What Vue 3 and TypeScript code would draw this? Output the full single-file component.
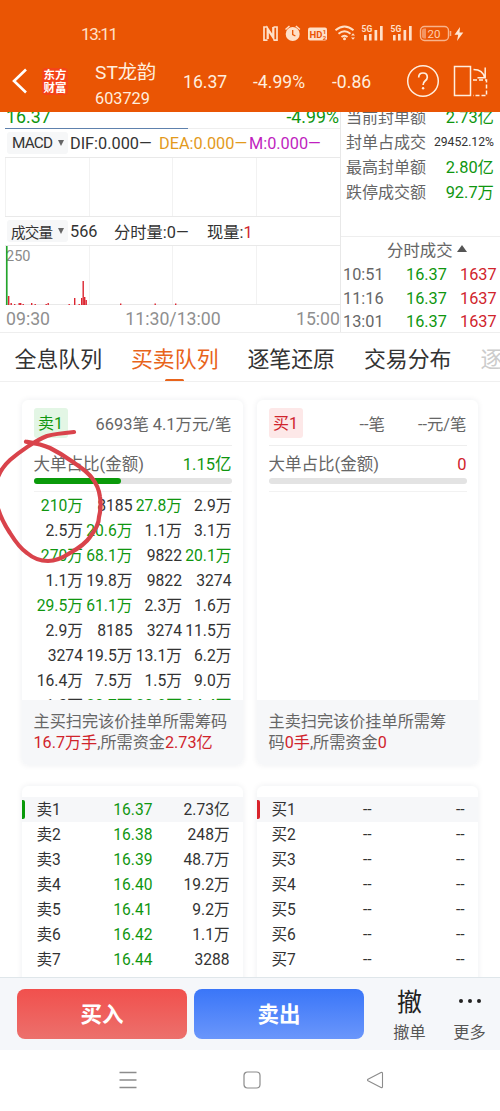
<script setup lang="ts">
type Tone = 'up' | 'down' | 'plain'

const sealStats: { label: string; value: string; small?: boolean }[] = [
  { label: '当前封单额', value: '2.73亿' },
  { label: '封单占成交', value: '29452.12%', small: true },
  { label: '最高封单额', value: '2.80亿' },
  { label: '跌停成交额', value: '92.7万' },
]

const ticks = [
  { time: '10:51', price: '16.37', volume: '1637' },
  { time: '11:16', price: '16.37', volume: '1637' },
  { time: '13:01', price: '16.37', volume: '1637' },
]

const tabs = ['全息队列', '买卖队列', '逐笔还原', '交易分布', '逐']

const queueRows: string[][] = [
  ['210万', '8185', '27.8万', '2.9万'],
  ['2.5万', '20.6万', '1.1万', '3.1万'],
  ['270万', '68.1万', '9822', '20.1万'],
  ['1.1万', '19.8万', '9822', '3274'],
  ['29.5万', '61.1万', '2.3万', '1.6万'],
  ['2.9万', '8185', '3274', '11.5万'],
  ['3274', '19.5万', '13.1万', '6.2万'],
  ['16.4万', '7.5万', '1.5万', '9.0万'],
  ['1.3万', '20.7万', '20.9万', '24.4万'],
]

// Orders above 200 thousand are highlighted as large orders.
function orderTone(text: string): Tone {
  return text.endsWith('万') && parseFloat(text) >= 20 ? 'down' : 'plain'
}

const asks = [
  ['卖1', '16.37', '2.73亿'],
  ['卖2', '16.38', '248万'],
  ['卖3', '16.39', '48.7万'],
  ['卖4', '16.40', '19.2万'],
  ['卖5', '16.41', '9.2万'],
  ['卖6', '16.42', '1.1万'],
  ['卖7', '16.44', '3288'],
]
const bids = [1, 2, 3, 4, 5, 6, 7].map((n) => [`买${n}`, '--', '--'])

// [x, height] of each red volume bar
const bars: number[][] = [
  [8.5, 9], [11, 2], [14.500, 1], [19, 2], [20.500, 2], [23, 1], [31.500, 2], [35, 1],
  [46, 1], [48, 2], [69, 1], [74.500, 7], [79, 1], [81.500, 7], [83, 24], [84.500, 8],
  [86, 5], [120.500, 1.500], [155, 1.500], [175.500, 1.500],
]
</script>

<template>
  <div class="screen">
    <header class="header">
      <div class="status">
        <span class="clock">13:11</span>
        <svg class="status-icons" width="206" height="22" viewBox="262 22 206 22">
          <g fill="none" stroke="#ffe0c8">
            <path d="M267.500 27H264v13.200h3.500M273.500 27h3.500v13.200h-3.500" stroke-width="1.700" />
            <path d="M267.700 39v-10l5.600 8.500v-10.500" stroke-width="2.300" />
          </g>
          <g fill="#ffe0c8">
            <circle cx="292.700" cy="34" r="7" />
            <path d="M285.500 29.500l4-3.500M299.900 29.500l-4-3.500" stroke="#ffe0c8" stroke-width="1.500" />
            <path d="M292.700 30v4.500l2.700 1.500" fill="none" stroke="#ea5504" stroke-width="1.300" />
            <rect x="308" y="27.500" width="19" height="13" rx="2" />
          </g>
          <text x="309.500" y="37.800" class="hd">HD</text>
          <text x="322.800" y="33.500" class="tiny">1</text>
          <text x="322.800" y="39.600" class="tiny">2</text>
          <g fill="none" stroke="#ffe0c8" stroke-width="1.900">
            <path d="M335.500 30.300q9-7.800 18 0M338.500 33.700q6-5 12 0M341.500 36.900q3-2.500 6 0" />
          </g>
          <circle cx="344.500" cy="38.800" r="1.500" fill="#ffe0c8" />
          <path d="M351 35.500l2-2.200 2 2.200zM351 37.500l2 2.200 2-2.200z" fill="#ffe0c8" />
          <g v-for="x in [362, 391]" :key="x" fill="#ffe0c8">
            <text :x="x - 0.500" y="32.300" class="five">5G</text>
            <rect :x="x + 2" y="35" width="2.600" height="5.500" />
            <rect :x="x + 7" y="34" width="2.600" height="6.500" />
            <rect :x="x + 12.500" y="30" width="2.700" height="10.500" />
            <rect :x="x + 18" y="26" width="2.700" height="14.500" />
          </g>
          <rect x="420.500" y="26.500" width="28" height="14" rx="4" fill="none" stroke="#f8b48c" stroke-width="1.400" />
          <path d="M424 28.500h2v10h-2q-2 0-2-2v-6q0-2 2-2z" fill="#f39462" />
          <path d="M450.500 31v5" stroke="#f8b48c" stroke-width="1.500" />
          <text x="427.500" y="37.800" class="battery">20</text>
          <path d="M460 27l-5.500 7.800h3.700l-1.200 6.200 6.300-8.500h-3.800z" fill="#ffe8d5" />
        </svg>
      </div>
      <div class="quote">
        <svg class="back" width="18" height="28" viewBox="0 0 18 28"><path d="M15 2.500L3 14l12 11.500" fill="none" stroke="#fff" stroke-width="2.600" /></svg>
        <div class="brand">东方<br />财富</div>
        <div class="stock"><div class="name">ST龙韵</div><div class="code">603729</div></div>
        <span class="num">16.37</span>
        <span class="num">-4.99%</span>
        <span class="num">-0.86</span>
        <svg class="help" width="34" height="34" viewBox="0 0 34 34">
          <circle cx="17" cy="17" r="15.300" fill="none" stroke="#ffeede" stroke-width="1.500" />
          <path d="M12.700 13.500q0-4.500 4.300-4.500 4.300 0 4.300 4.200 0 2-2.300 3.800-1.900 1.500-1.900 4" fill="none" stroke="#ffeede" stroke-width="1.700" />
          <circle cx="17.100" cy="24.200" r="1.200" fill="#ffeede" />
        </svg>
        <svg class="rotate" width="36" height="34" viewBox="0 0 36 34">
          <g fill="none" stroke="#ffeede" stroke-width="1.500">
            <rect x="1.500" y="2.500" width="16" height="29" />
            <path d="M20 16h13.500v15.500H20" stroke-dasharray="4 2" />
            <path d="M20.500 5.500q9.500 0 11.200 8.500M24.500 13.800h7.700V3.500" />
          </g>
        </svg>
      </div>
    </header>

    <section class="market">
      <div class="charts">
        <div class="price-end"><span>16.37</span><span>-4.99%</span></div>
        <div class="indicator">
          <span class="picker">MACD<i class="caret"></i></span>
          <span class="dif">DIF:0.000—</span><span class="dea">DEA:0.000—</span><span class="m">M:0.000—</span>
        </div>
        <div class="plot"><i></i><i></i><i></i><i></i></div>
        <div class="indicator vol">
          <span class="picker">成交量<i class="caret"></i></span>
          <span class="total">566</span><span class="minute">分时量:0—</span><span>现量:<b>1</b></span>
        </div>
        <div class="plot volume">
          <i></i><i></i><i></i><i></i>
          <span class="scale">250</span>
          <svg class="bars" width="340" height="59" viewBox="0 0 340 59">
            <rect x="6" y="0" width="1.600" height="59" fill="#23a52c" />
            <rect v-for="b in bars" :key="b[0]" :x="b[0] - 0.500" :y="59 - b[1]" width="1.400" :height="b[1]" fill="#dc2530" />
          </svg>
        </div>
        <div class="axis"><span>09:30</span><span>11:30/13:00</span><span>15:00</span></div>
      </div>
      <aside class="side">
        <div class="stats">
          <div v-for="s in sealStats" :key="s.label" class="stat">
            <span>{{ s.label }}</span><span :class="s.small ? 'small' : 'down'">{{ s.value }}</span>
          </div>
        </div>
        <div class="ticks-title">分时成交<i></i></div>
        <div v-for="t in ticks" :key="t.time" class="tick">
          <span>{{ t.time }}</span><span class="down">{{ t.price }}</span><span class="up">{{ t.volume }}</span>
        </div>
      </aside>
    </section>

    <nav class="tabs">
      <span v-for="(t, i) in tabs" :key="i" :class="['tab', { active: i === 1, faded: i === 4 }]">{{ t }}</span>
    </nav>

    <main class="content">
      <section class="card queue">
        <div class="head"><span class="tag sell">卖1</span><span class="per"><span>6693笔</span><span>4.1万元/笔</span></span></div>
        <div class="ratio">
          <div class="ratio-text"><span>大单占比(金额)</span><span class="down">1.15亿</span></div>
          <div class="track"><div class="fill"></div></div>
        </div>
        <div class="orders">
          <template v-for="(r, i) in queueRows" :key="i">
            <span v-for="(c, j) in r" :key="j" :class="orderTone(c)">{{ c }}</span>
          </template>
        </div>
        <footer>主买扫完该价挂单所需筹码<br /><span class="up">16.7万手</span>,所需资金<span class="up">2.73亿</span></footer>
      </section>
      <section class="card queue">
        <div class="head"><span class="tag buy">买1</span><span class="per wide"><span>--笔</span><span>--元/笔</span></span></div>
        <div class="ratio">
          <div class="ratio-text"><span>大单占比(金额)</span><span class="up">0</span></div>
          <div class="track"></div>
        </div>
        <div class="orders"></div>
        <footer>主卖扫完该价挂单所需筹<br />码<span class="up">0手</span>,所需资金<span class="up">0</span></footer>
      </section>
      <section class="card book asks">
        <div v-for="r in asks" :key="r[0]" class="level"><span>{{ r[0] }}</span><span class="down">{{ r[1] }}</span><span>{{ r[2] }}</span></div>
      </section>
      <section class="card book bids">
        <div v-for="r in bids" :key="r[0]" class="level"><span>{{ r[0] }}</span><span>{{ r[1] }}</span><span>{{ r[2] }}</span></div>
      </section>
    </main>

    <div class="actions">
      <button class="trade buy-btn">买入</button>
      <button class="trade sell-btn">卖出</button>
      <div class="action"><span class="glyph">撤</span><span>撤单</span></div>
      <div class="action more"><span class="dots"><i></i><i></i><i></i></span><span>更多</span></div>
    </div>

    <div class="system-nav">
      <svg width="18" height="18" viewBox="0 0 18 18"><path d="M.5 1.500h17M.5 9h17M.5 16.500h17" stroke="#8c8c8c" stroke-width="1.300" /></svg>
      <svg width="18" height="18" viewBox="0 0 18 18"><rect x="1" y="1" width="16" height="16" rx="3.500" fill="none" stroke="#8c8c8c" stroke-width="1.200" /></svg>
      <svg width="18" height="18" viewBox="0 0 18 18"><path d="M15 1.500L2 8.200q-1 .8 0 1.600L15 16.500q1.500.5 1.500-1V2.500q0-1.500-1.500-1z" fill="none" stroke="#8c8c8c" stroke-width="1.100" /></svg>
    </div>

    <svg class="marker" width="110" height="140" viewBox="0 425 110 140">
      <path
        d="M74 432C63 433 54 434 47 436C36 440 18 453 10 460C-1 470 -5 482 -5 493C-4 507 2 521 10 533C15 541 21 549 27 553C34 559 41 561 48 561C56 561 64 557 70 553C79 548 86 543 90 537C97 528 99 522 99 517C101 509 101 503 100 497C99 488 96 483 92 478C87 471 80 467 73 462C66 457 58 452 50 448C41 444 34 443 26 441.700"
        fill="none" stroke="#d9434b" stroke-width="4.200" stroke-linecap="round" stroke-linejoin="round" />
    </svg>
  </div>
</template>

<style>
body {
  margin: 0;
}
</style>

<style scoped>
* {
  box-sizing: border-box;
}
.screen {
  position: relative;
  width: 500px;
  height: 1111px;
  overflow: hidden;
  background: #fff;
  color: #333;
  font-family: Roboto, 'Noto Sans CJK SC', sans-serif;
  font-size: 16px;
  white-space: nowrap;
}
.up { color: #d0242c; }
.down { color: #0f960f; }
.header {
  height: 112px;
  background: #ea5504;
  color: #ffeede;
}
.status {
  display: flex;
  align-items: center;
  justify-content: space-between;
  height: 44px;
  padding: 22px 32px 0 81px;
}
.clock { font-size: 17px; line-height: 22px; padding-top: 2px; letter-spacing: -1.300px; color: #ffe0c8; }
.status-icons text { font-family: Roboto, sans-serif; font-weight: 700; }
.status-icons .hd { font-size: 9.500px; fill: #ea5504; }
.status-icons .tiny { font-size: 6px; fill: #ea5504; }
.status-icons .five { font-size: 8.500px; }
.status-icons .battery { font-size: 11.500px; font-weight: 400; fill: #ffd0b0; }
.quote {
  display: grid;
  grid-template-columns: 42px 53px 88px 70px 79px 73px 49px 40px;
  align-items: center;
  height: 68px;
}
.back { margin: 6px 0 0 11px; }
.brand {
  width: 26px;
  height: 27px;
  margin-top: 6px;
  background: #f44318;
  border-radius: 4px;
  color: #fff;
  font: 700 11.500px/13px 'Noto Sans CJK SC', sans-serif;
  text-align: center;
}
.name { font-size: 19.200px; line-height: 26px; }
.code { font-size: 16.300px; line-height: 20px; margin-top: 3px; }
.stock { padding-top: 12px; }
.num { font-size: 17.600px; line-height: 24px; padding-top: 7px; }
.help { margin: 5px 0 0 1px; }
.rotate { margin: 6px 0 0 -1px; }

.market {
  display: flex;
  height: 221px;
  border-bottom: 1px solid #eee;
}
.charts { width: 341px; border-right: 1px solid #e8e8e8; }
.price-end {
  display: flex;
  justify-content: space-between;
  align-items: flex-end;
  height: 17px;
  overflow: hidden;
  padding: 0 1px 0 6px;
  border-style: solid;
  border-width: 0 0 1.500px;
  border-image: linear-gradient(90deg, #fff 6px, #5e81ad 6px 188px, #eee 188px) 1;
  color: #0f960f;
  font-size: 17.800px;
  line-height: 22px;
}
.indicator {
  display: flex;
  align-items: center;
  height: 28px;
  padding-left: 7px;
  font-size: 16.300px;
}
.indicator b { color: #d0242c; font-weight: 400; }
.picker {
  display: flex;
  align-items: center;
  justify-content: space-between;
  width: 61px;
  height: 22px;
  padding: 0 4px 0 5px;
  margin-right: 2px;
  background: #f6f7f8;
  border-radius: 3px;
  font-size: 15.300px;
  letter-spacing: -0.800px;
}
.vol .picker { font-size: 14.600px; padding-left: 4px; }
.caret { border: 3.500px solid transparent; border-top: 6px solid #666; border-bottom: 0; }
.dif { width: 89px; }
.dea { width: 90px; color: #e39a1c; }
.m { color: #c01fc0; }
.total { width: 44px; }
.minute { width: 93px; }
.plot {
  position: relative;
  display: flex;
  height: 60px;
  border: solid #e9e9e9;
  border-width: 1px 0 1px;
  margin-left: 5px;
}
.plot i { width: 83.500px; border-left: 1px solid #f2f2f2; }
.scale { position: absolute; left: 1px; top: 2px; font-size: 14.500px; line-height: 18px; color: #8a8a8a; }
.bars { position: absolute; left: -5px; top: 0; }
.axis {
  display: flex;
  justify-content: space-between;
  padding: 0 0 0 6px;
  color: #8f8f8f;
  font-size: 17.700px;
  line-height: 28px;
}
.side { width: 159px; }
.stats { height: 125px; overflow: hidden; border-bottom: 1px solid #eee; }
.stat {
  display: flex;
  justify-content: space-between;
  height: 25px;
  padding: 0 6px 0 5px;
  line-height: 25px;
  color: #666;
}
.stat:first-child { margin-top: -7px; }
.stat .down { font-size: 16.400px; }
.small { font-size: 12.200px; color: #333; }
.ticks-title { padding-left: 46px; line-height: 27px; height: 26px; color: #666; font-size: 16.400px; }
.ticks-title i {
  display: inline-block;
  margin-left: 4px;
  border: 5px solid transparent;
  border-bottom: 7px solid #555;
  border-top: 0;
  vertical-align: 4px;
}
.tick {
  display: grid;
  grid-template-columns: 63px 54px 40px;
  padding-left: 2px;
  line-height: 23.500px;
  font-size: 16.300px;
}
.tick span:first-child { color: #666; }

.tabs {
  display: flex;
  gap: 28.900px;
  height: 49px;
  padding-left: 14.500px;
  border-bottom: 1px solid #f0f0f0;
  font-size: 21.900px;
  line-height: 53px;
  overflow: hidden;
}
.tab { position: relative; flex: none; height: 48px; }
.active { color: #e8641b; }
.active::after {
  content: '';
  position: absolute;
  left: 34px;
  bottom: -1px;
  width: 19px;
  height: 3px;
  border-radius: 2px;
  background: #e8641b;
}
.faded { color: #ccc; }

.content {
  display: grid;
  grid-template-columns: 221px 221px;
  grid-template-rows: 365px 200px;
  gap: 21px 14px;
  height: 595px;
  padding: 18px 22px 0;
  overflow: hidden;
}
.card {
  background: #fff;
  border-radius: 6px;
  box-shadow: 0 0 6px rgba(30, 40, 60, 0.08);
  overflow: hidden;
}
.queue { display: flex; flex-direction: column; }
.head, .ratio, .orders { margin: 0 11.500px; }
.head {
  display: flex;
  align-items: center;
  justify-content: space-between;
  height: 46px;
  border-bottom: 1px solid #eee;
  color: #666;
}
.tag { width: 34px; height: 30px; border-radius: 3px; font-size: 16px; line-height: 32px; text-align: center; }
.sell { background: #e3f6e5; color: #0f960f; }
.buy { background: #fde8e8; color: #d0242c; }
.per { display: flex; gap: 4px; font-size: 16.400px; }
.per.wide { gap: 33px; }
.ratio { height: 46px; border-bottom: 1px solid #f2f2f2; }
.ratio-text {
  display: flex;
  justify-content: space-between;
  height: 32px;
  line-height: 38px;
  font-size: 16.500px;
}
.ratio-text span:first-child { color: #666; }
.track { height: 6px; border-radius: 3px; background: #e3e3e3; }
.fill { width: 87px; height: 6px; border-radius: 3px; background: #0a9a0a; }
.orders {
  display: grid;
  grid-template-columns: repeat(4, 49.500px);
  grid-auto-rows: 25px;
  height: 208px;
  padding-top: 1px;
  overflow: hidden;
  font-size: 15.700px;
  line-height: 25px;
}
.orders span { display: flex; justify-content: flex-end; }
.queue footer {
  flex: 1;
  padding: 11px 0 0 11.500px;
  background: #f6f7f9;
  color: #666;
  font-size: 16.150px;
  line-height: 21px;
}
.book { padding-top: 11px; }
.level {
  position: relative;
  display: grid;
  grid-template-columns: 40px 76px 77px;
  height: 25px;
  padding-left: 14.500px;
  line-height: 27px;
  font-size: 15.600px;
}
.level span:nth-child(2) { text-align: right; }
.level span:nth-child(3) { text-align: right; }
.bids .level { grid-template-columns: 40px 60px 93px; }
.level:first-child { background: #f6f7f9; }
.level:first-child::before {
  content: '';
  position: absolute;
  left: 0;
  top: 3px;
  width: 3px;
  height: 19px;
  border-radius: 0 2px 2px 0;
  background: #0a9a0a;
}
.bids .level:first-child::before { background: #d9242c; }

.actions {
  display: flex;
  height: 73px;
  padding: 11px 0 0 17px;
  border-top: 1px solid #dfe6ea;
  background: #f5f7fa;
}
.trade {
  flex: none;
  width: 170px;
  height: 50px;
  margin: 0 7px 0 0;
  padding: 0;
  border: 0;
  border-radius: 8px;
  color: #fff;
  font: 700 21.500px/52px Roboto, 'Noto Sans CJK SC', sans-serif;
}
.buy-btn { background: linear-gradient(#f1504d, #ec706c); }
.sell-btn { background: linear-gradient(#3a76f8, #6a96fb); }
.action {
  display: flex;
  flex: none;
  flex-direction: column;
  align-items: center;
  width: 64px;
  margin-left: 6.500px;
  color: #555;
  font-size: 16.200px;
  line-height: 24px;
}
.glyph { height: 37px; margin-top: -5px; padding-top: 3px; color: #222; font-size: 25px; line-height: 32px; }
.dots { display: flex; gap: 5px; padding: 10px 0 18px; }
.dots i { width: 4px; height: 4px; border-radius: 50%; background: #222; }
.more { width: 56px; margin-left: 0; }
.system-nav {
  display: flex;
  justify-content: space-between;
  padding: 21px 116px 0 119px;
}
.marker { position: absolute; left: 0; top: 425px; }
</style>
